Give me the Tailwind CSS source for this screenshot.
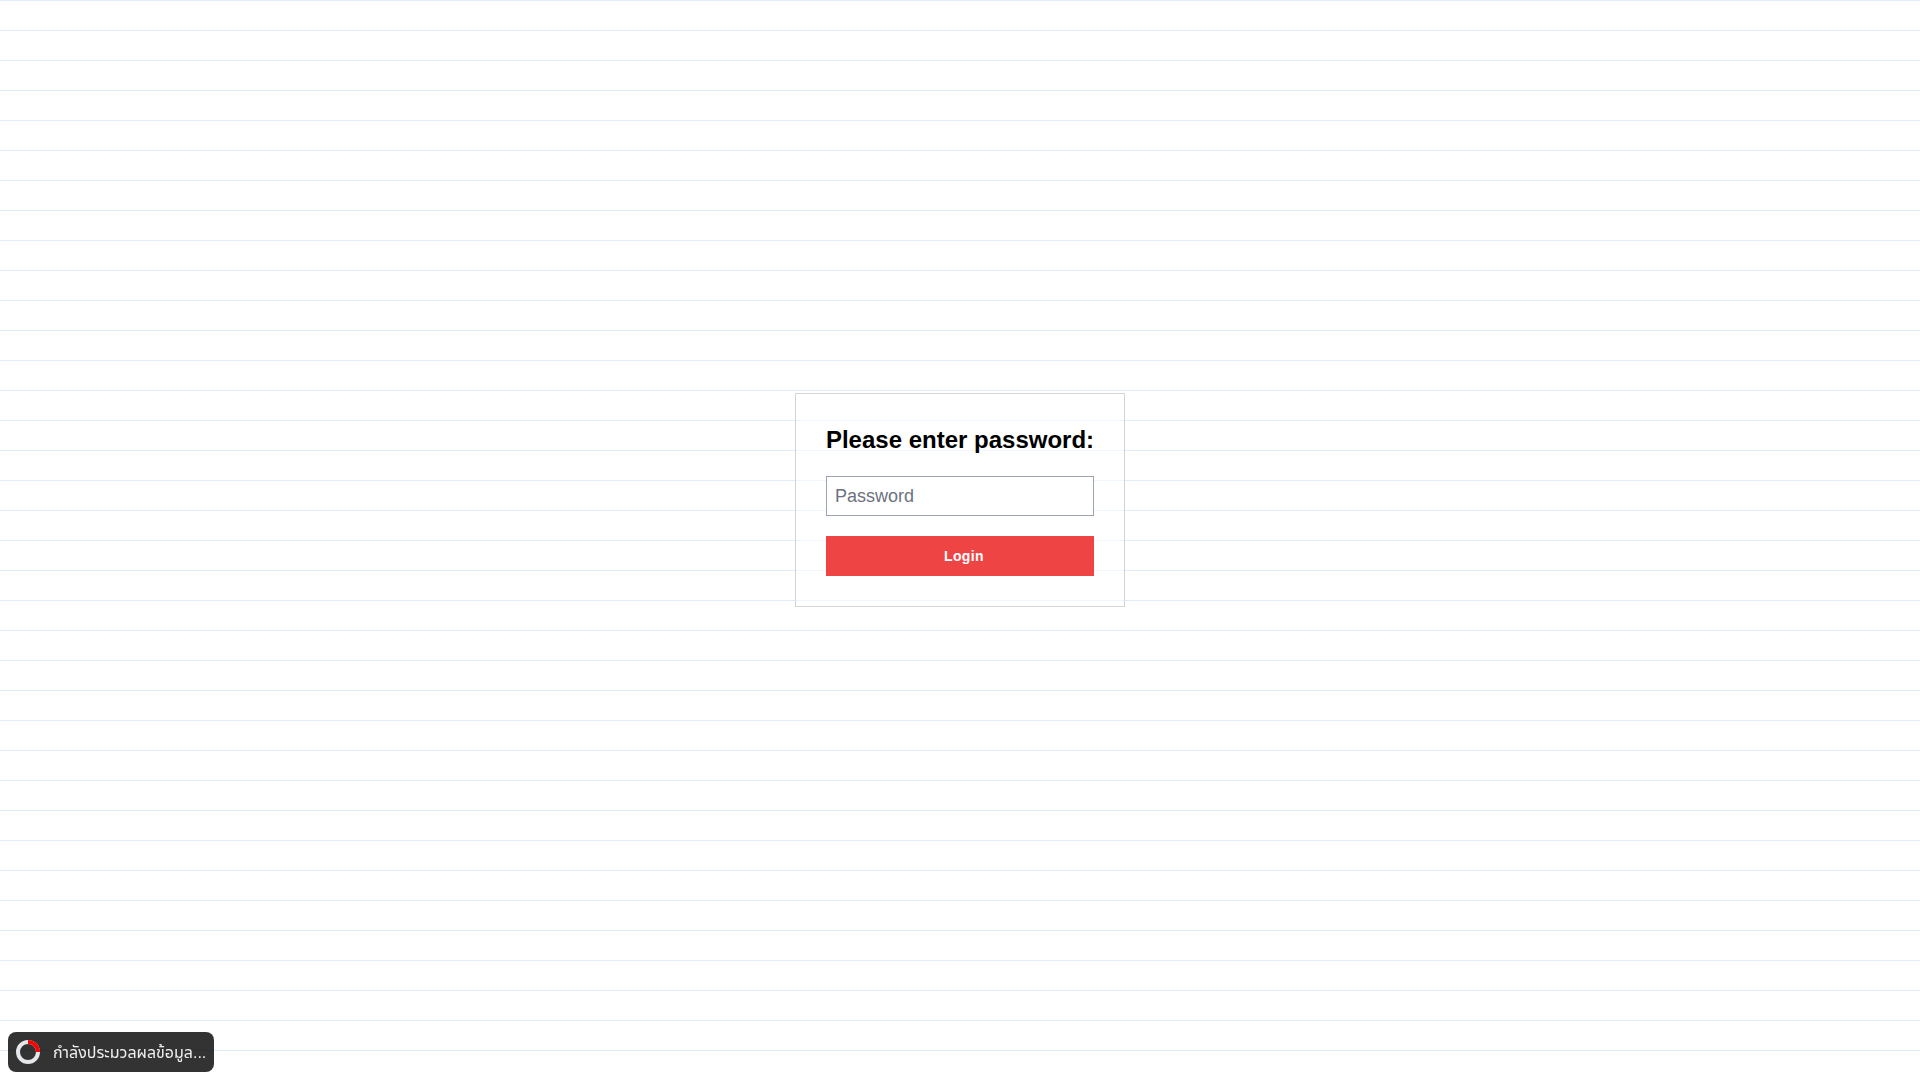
<!DOCTYPE html>
<html lang="th">
<head>
  <meta charset="utf-8">
  <meta name="viewport" content="width=device-width, initial-scale=1">
  <title>Login</title>
  <script src="https://cdn.jsdelivr.net/npm/@tailwindcss/browser@4"></script>
</head>
<body class="min-h-screen flex items-center justify-center pb-20 bg-white bg-[linear-gradient(#e0edff_1px,transparent_1px)] bg-[length:100%_30px] font-['Liberation_Sans',sans-serif] text-black">

  <form class="flex flex-col gap-5 p-[30px] border border-[#d4d4d4] bg-white/50">
    <h1 class="text-2xl font-bold"><label for="password">Please enter password:</label></h1>
    <input id="password" type="password" placeholder="Password"
      class="w-full h-10 px-2 border border-[#9ca3af] bg-white text-lg placeholder:text-[#6b7280]" />
    <button type="submit" class="h-10 pl-2 bg-[#ef4444] text-sm font-bold tracking-wide text-white">Login</button>
  </form>

  <!-- loading toast -->
  <div role="status" class="fixed left-2 bottom-2 h-10 flex items-center gap-[13px] px-2 rounded-lg bg-black/80 text-[#eee]">
    <svg class="w-6 h-6" viewBox="0 0 24 24" fill="none" stroke-width="4">
      <circle cx="12" cy="12" r="10" stroke="#e5e7eb" />
      <path d="M12 2a10 10 0 0 1 10 10" stroke="#f00" />
    </svg>
    <span class="text-base font-['Noto_Sans_Thai_UI','Liberation_Sans','Noto_Sans_Thai',sans-serif]">กำลังประมวลผลข้อมูล...</span>
  </div>

</body>
</html>
